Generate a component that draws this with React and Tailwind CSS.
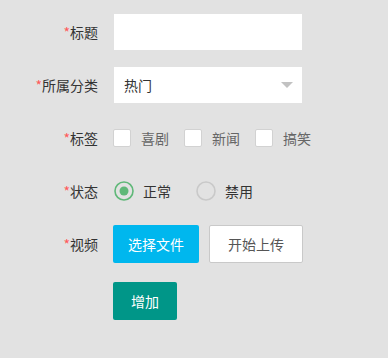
import React from "react";

const font = { fontFamily: '"Noto Sans CJK SC", "Liberation Sans", sans-serif' };

function Label({ children }) {
  return (
    <div className="w-[98px] shrink-0 text-right text-[14px] text-[#333]">
      <span className="text-[#ff5a5a]">*</span>
      {children}
    </div>
  );
}

function Checkbox({ label }) {
  return (
    <div className="flex items-center mr-[15px]">
      <span className="w-[18px] h-[18px] bg-white border border-[#d2d2d2] rounded-[2px]" />
      <span className="ml-[10px] text-[14px] text-[#666]">{label}</span>
    </div>
  );
}

function Radio({ label, checked }) {
  return (
    <div className="flex items-center mr-[25px]">
      <svg width="20" height="20" viewBox="0 0 20 20">
        <circle cx="10" cy="10" r="9" fill="none" stroke={checked ? "#5fb878" : "#c9c9c9"} strokeWidth="1.6" />
        {checked && <circle cx="10" cy="10" r="4.5" fill="#5fb878" />}
      </svg>
      <span className="ml-[9px] text-[14px] text-[#333]">{label}</span>
    </div>
  );
}

export default function App() {
  return (
    <div className="w-[388px] h-[358px] bg-[#e2e2e2] pt-[14px]" style={font}>
      <div className="flex items-center h-[36px]">
        <Label>标题</Label>
        <div className="ml-[16px] w-[188px] h-[36px] bg-white" />
      </div>
      <div className="flex items-center h-[36px] mt-[17px]">
        <Label>所属分类</Label>
        <div className="ml-[16px] w-[188px] h-[36px] bg-white flex items-center justify-between pl-[10px] pr-[9px]">
          <span className="text-[14px] text-[#333]">热门</span>
          <svg width="12" height="6" viewBox="0 0 12 6">
            <path d="M0 0 L12 0 L6 6 Z" fill="#c2c2c2" />
          </svg>
        </div>
      </div>
      <div className="flex items-center h-[36px] mt-[17px]">
        <Label>标签</Label>
        <div className="ml-[15px] flex items-center">
          <Checkbox label="喜剧" />
          <Checkbox label="新闻" />
          <Checkbox label="搞笑" />
        </div>
      </div>
      <div className="flex items-center h-[36px] mt-[17px]">
        <Label>状态</Label>
        <div className="ml-[16px] flex items-center">
          <Radio label="正常" checked />
          <Radio label="禁用" />
        </div>
      </div>
      <div className="flex items-center h-[38px] mt-[16px]">
        <Label>视频</Label>
        <div className="ml-[15px] flex items-center gap-[10px]">
          <div className="h-[38px] px-[15px] flex items-center bg-[#00b7ee] text-white text-[14px] rounded-[2px]">选择文件</div>
          <div className="h-[38px] px-[18px] flex items-center bg-white border border-[#c9c9c9] text-[#555] text-[14px] rounded-[2px]">开始上传</div>
        </div>
      </div>
      <div className="flex items-center h-[38px] mt-[19px]">
        <div className="w-[98px] shrink-0" />
        <div className="ml-[15px] h-[38px] px-[18px] flex items-center bg-[#009688] text-white text-[14px] rounded-[2px]">增加</div>
      </div>
    </div>
  );
}
